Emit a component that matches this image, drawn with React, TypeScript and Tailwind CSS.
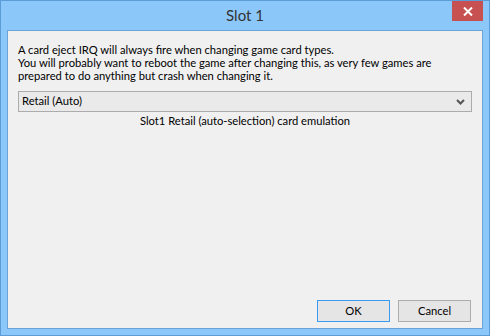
const font = { fontFamily: 'Lato, "Noto Sans", sans-serif' };

export default function App() {
  return (
    <div
      className="w-[490px] h-[336px] bg-[#8cc7f9] border border-[#5a9bd8] flex flex-col text-[#000]"
      style={font}
    >
      <div className="h-[29px] flex items-start relative">
        <div className="flex-1 text-center text-[15px] text-[#333] leading-[29px]">Slot 1</div>
        <div className="absolute right-[6px] top-0 w-[31px] h-[20px] bg-[#c75050] flex items-center justify-center">
          <svg width="10" height="9" viewBox="0 0 10 9">
            <path d="M1 0.5 L9 8.5 M9 0.5 L1 8.5" stroke="#fff" strokeWidth="2" />
          </svg>
        </div>
      </div>
      <div className="mx-[6px] mb-[6px] flex-1 border border-[#6aa3d9] bg-[#f0f0f0] flex flex-col px-[10px] pt-[12px] pb-[6px]">
        <div className="text-[11.2px] leading-[13px] whitespace-nowrap">
          <p>A card eject IRQ will always fire when changing game card types.</p>
          <p>You will probably want to reboot the game after changing this, as very few games are</p>
          <p>prepared to do anything but crash when changing it.</p>
        </div>
        <div className="mt-[9px] h-[21px] border border-[#acacac] bg-[#eaeaea] flex items-center justify-between pl-[3px] pr-[6px] text-[11.2px]">
          <span>Retail (Auto)</span>
          <svg width="9" height="6" viewBox="0 0 9 6">
            <path d="M1 1 L4.5 4.5 L8 1" stroke="#555" strokeWidth="2" fill="none" />
          </svg>
        </div>
        <div className="text-center text-[11.2px] leading-[13px] mt-[2px]">
          Slot1 Retail (auto-selection) card emulation
        </div>
        <div className="flex-1" />
        <div className="flex justify-end gap-[8px] pr-[1px]">
          <button className="w-[73px] h-[22px] border border-[#3c9af0] bg-[#e5e5e5] text-[11.2px]">OK</button>
          <button className="w-[73px] h-[22px] border border-[#adadad] bg-[#e5e5e5] text-[11.2px]">Cancel</button>
        </div>
      </div>
    </div>
  );
}
